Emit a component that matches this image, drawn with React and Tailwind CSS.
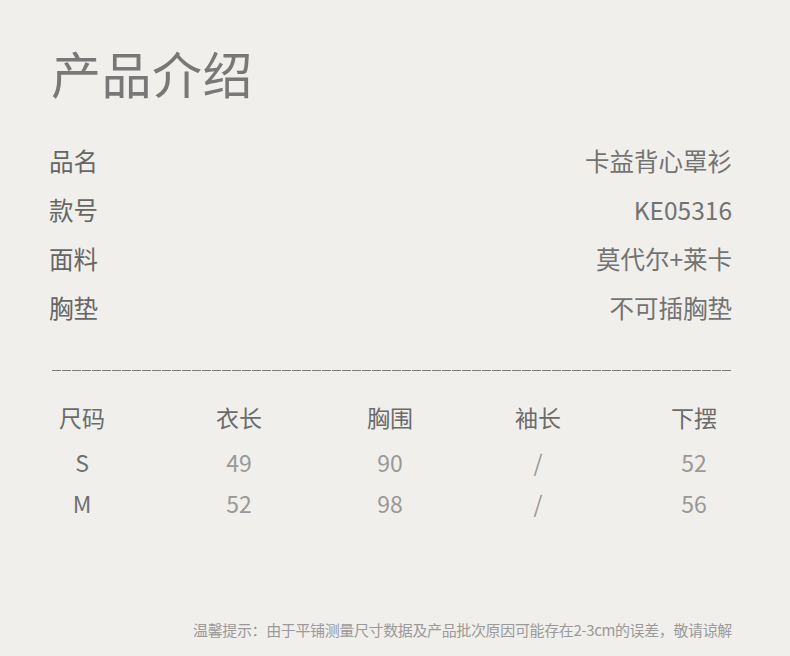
const info = [
  ['品名', '卡益背心罩衫'],
  ['款号', 'KE05316'],
  ['面料', '莫代尔+莱卡'],
  ['胸垫', '不可插胸垫'],
];

const sizes = [
  ['S', '49', '90', '/', '52'],
  ['M', '52', '98', '/', '56'],
];

const cols = 'grid grid-cols-[157px_151px_148px_156px_100px] ml-[32px]';

export default function App() {
  return (
    <div
      className="w-[790px] h-[656px] bg-[#f0efeb] overflow-hidden"
      style={{ fontFamily: '"Noto Sans CJK SC", "Noto Sans", sans-serif' }}
    >
      {/* Title */}
      <div className="pt-[47px] pl-[51px]">
        <h1 className="text-[50px] leading-[50px] text-[#787878] tracking-[0.5px]">产品介绍</h1>
      </div>

      {/* Product info */}
      <div className="mt-[40px] pl-[49px] pr-[58px]">
        {info.map(([label, value]) => (
          <div key={label} className="h-[49px] flex items-center justify-between text-[24.5px]">
            <span className="text-[#666]">{label}</span>
            <span className="text-[#737373]">{value}</span>
          </div>
        ))}
      </div>

      {/* Dashed divider */}
      <div className="mt-[37px] ml-[52px] w-[680px] h-px bg-[repeating-linear-gradient(90deg,#7c7c7c_0_9px,transparent_9px_10px)]"></div>

      {/* Size table */}
      <div className="mt-[21px]">
        <div className={`${cols} h-[50px] items-center text-[23px] text-[#6b6b6b]`}>
          {['尺码', '衣长', '胸围', '袖长', '下摆'].map((h) => (
            <div key={h} className="w-[100px] text-center">{h}</div>
          ))}
        </div>
        {sizes.map((row) => (
          <div key={row[0]} className={`${cols} h-[41px] items-center text-[23px]`}>
            {row.map((v, i) => (
              <div key={i} className={`w-[100px] text-center ${i === 0 ? 'text-[#707070]' : 'text-[#999]'}`}>
                {v}
              </div>
            ))}
          </div>
        ))}
      </div>

      {/* Footnote */}
      <div className="mt-[96px] pr-[58px] text-right text-[15px] leading-[20px] tracking-[-0.37px] text-[#9a9a9a]">
        温馨提示：由于平铺测量尺寸数据及产品批次原因可能存在2-3cm的误差，敬请谅解
      </div>
    </div>
  );
}
